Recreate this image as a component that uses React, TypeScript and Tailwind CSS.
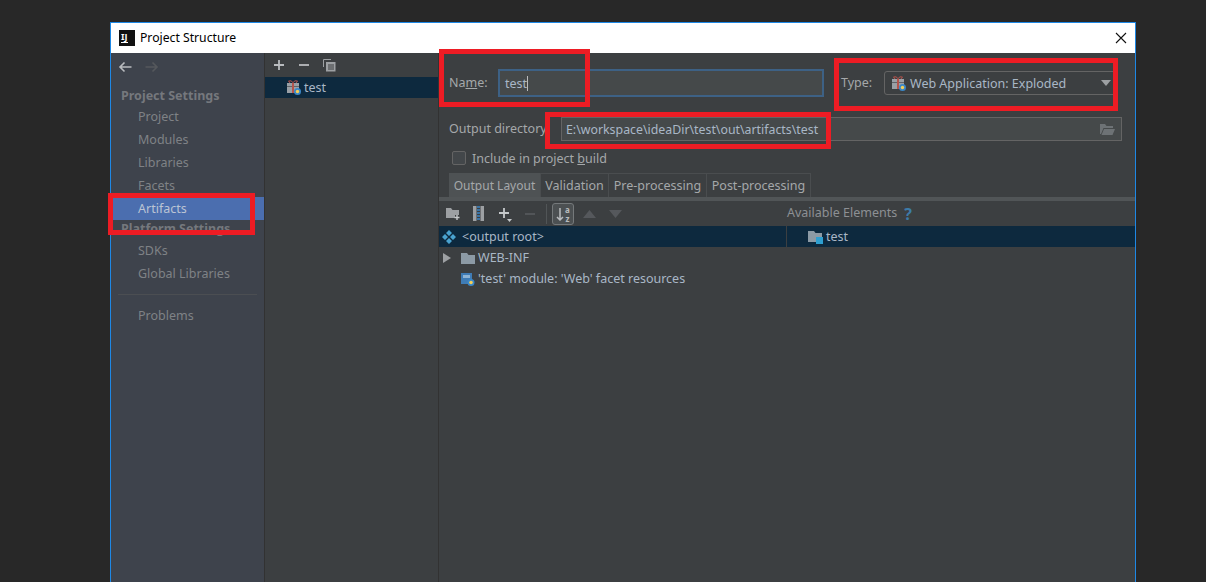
const FONT = "font-['Noto_Sans','Open_Sans',sans-serif]";

const settingsTop = ["Project", "Modules", "Libraries", "Facets"];
const platformItems = ["SDKs", "Global Libraries"];

function ArtifactIcon() {
  return (
    <svg width="14" height="15" viewBox="0 0 14 15" className="shrink-0">
      <path d="M3 3 L1.5 1 L4 .8 L6 2.6 L8 .8 L10.5 1 L9 3" fill="none" stroke="#b5544c" strokeWidth="1" />
      <rect x="0" y="3" width="12" height="10" fill="#9aa0a6" />
      <rect x="0" y="6" width="12" height="1" fill="#5f6368" />
      <rect x="5" y="3" width="2" height="10" fill="#b5544c" />
      <circle cx="10.5" cy="11.5" r="3.5" fill="#3a87c8" />
      <circle cx="10.5" cy="11.5" r="1.7" fill="#f4cf58" />
    </svg>
  );
}

function SidebarItem({ label, active }: { label: string; active?: boolean }) {
  return (
    <div
      className={
        "h-[23px] pl-[27px] flex items-center text-[12.5px] " +
        (active ? "bg-[#4b6eaf] text-[#bbc4d4]" : "text-[#7f8286]")
      }
    >
      <span className="relative top-px">{label}</span>
    </div>
  );
}

function RedBox({ className }: { className: string }) {
  return <div className={"absolute border-[5px] border-[#ed1c24] " + className} />;
}

function Tab({ label, active, width }: { label: string; active?: boolean; width: string }) {
  return (
    <div
      className={
        "h-[24px] flex items-center justify-center border-r border-[#4a4d4f] text-[#a5a8aa] " +
        width +
        (active ? " bg-[#4e5254] text-[12px]" : " bg-[#3c3f41] border-t text-[12.5px]")
      }
    >
      <span className="relative top-px">{label}</span>
    </div>
  );
}

export default function App() {
  return (
    <div className={"relative w-[1206px] h-[582px] overflow-hidden bg-[#282828] pl-[110px] pt-[22px] " + FONT}>
      <div className="w-[1026px] h-[560px] border-x border-t border-[#1e88e5] flex flex-col bg-[#3c3f41]">
        {/* title bar */}
        <div className="h-[30px] shrink-0 bg-white flex items-center pl-[8px] pr-[8px] text-[12.2px] text-black">
          <div className="w-[16px] h-[16px] bg-[#111] text-white text-[9px] font-bold leading-none pt-[2px] pl-[2px] mr-[5px]">
            IJ
            <div className="w-[7px] h-px bg-white mt-[1px]" />
          </div>
          <span>Project Structure</span>
          <svg width="12" height="12" viewBox="0 0 12 12" className="ml-auto">
            <path d="M1 1 L11 11 M11 1 L1 11" stroke="#111" strokeWidth="1.1" />
          </svg>
        </div>

        <div className="flex flex-1 min-h-0">
          {/* settings sidebar */}
          <div className="w-[154px] shrink-0 bg-[#3e434c] border-r border-[#323232]">
            <div className="h-[28px] pl-[7px] flex items-center gap-[13px]">
              <svg width="14" height="12" viewBox="0 0 14 12">
                <path d="M13.5 6 H2 M6.5 1.5 L2 6 L6.5 10.5" fill="none" stroke="#b9bcbf" strokeWidth="1.6" />
              </svg>
              <svg width="14" height="12" viewBox="0 0 14 12">
                <path d="M.5 6 H12 M7.5 1.5 L12 6 L7.5 10.5" fill="none" stroke="#55585c" strokeWidth="1.6" />
              </svg>
            </div>
            <div className="h-[24px] pl-[10px] pt-[6px] flex items-center text-[12.5px] font-bold text-[#75787d]">
              Project Settings
            </div>
            {settingsTop.map((s) => (
              <SidebarItem key={s} label={s} />
            ))}
            <SidebarItem label="Artifacts" active />
            <div className="h-[19px] pl-[10px] flex items-center text-[12.5px] font-bold text-[#75787d]">
              Platform Settings
            </div>
            {platformItems.map((s) => (
              <SidebarItem key={s} label={s} />
            ))}
            <div className="h-px bg-[#4b4e52] mx-[7px] mt-[9px]" />
            <div className="mt-[9px]">
              <SidebarItem label="Problems" />
            </div>
          </div>

          {/* artifact list */}
          <div className="w-[174px] shrink-0 border-r border-[#323232]">
            <div className="h-[24px] pl-[8px] flex items-center gap-[13px]">
              <svg width="12" height="12" viewBox="0 0 12 12">
                <path d="M6 1 V11 M1 6 H11" stroke="#b9bcbf" strokeWidth="1.8" />
              </svg>
              <svg width="12" height="12" viewBox="0 0 12 12">
                <path d="M1 6 H11" stroke="#b9bcbf" strokeWidth="1.8" />
              </svg>
              <svg width="13" height="13" viewBox="0 0 13 13">
                <path d="M.5 8 V.5 H8" fill="none" stroke="#9da0a3" />
                <rect x="3" y="3" width="9.5" height="9.5" fill="#9da0a3" />
                <path d="M5 6 H11 M5 8 H11 M5 10 H11" stroke="#3c3f41" />
              </svg>
            </div>
            <div className="h-[21px] bg-[#0d293e] pl-[22px] flex items-center gap-[3px] text-[12.5px] text-[#a9b7c6]">
              <ArtifactIcon />
              <span className="relative top-px">test</span>
            </div>
          </div>

          {/* artifact details */}
          <div className="flex-1 min-w-0 flex flex-col">
            <div className="h-[64px] shrink-0 pl-[10px] pr-[19px] pt-[16px] flex items-start text-[12.5px] text-[#a5a8aa]">
              <span className="w-[49px] h-[28px] pt-px flex items-center">
                <span>
                  Na<span className="underline">m</span>e:
                </span>
              </span>
              <div className="w-[326px] h-[28px] border-[2px] border-[#3d6185] bg-[#45494a] pl-[5px] flex items-center text-[#a9b7c6]">
                <span className="relative top-px">test</span>
                <span className="w-px h-[15px] bg-[#bbb]" />
              </div>
              <span className="ml-[17px] w-[43px] h-[28px] pt-px flex items-center">Type:</span>
              <div className="flex-1 h-[24px] mt-[2px] border border-[#646464] rounded-[3px] pl-[7px] pr-[4px] flex items-center gap-[4px] text-[#a9b7c6]">
                <ArtifactIcon />
                <span className="relative top-px">Web Application: Exploded</span>
                <svg width="10" height="6" viewBox="0 0 10 6" className="ml-auto">
                  <path d="M0 0 H10 L5 6 Z" fill="#9da0a3" />
                </svg>
              </div>
            </div>
            <div className="h-[24px] shrink-0 pl-[10px] pr-[13px] flex items-center text-[12.5px] text-[#a5a8aa]">
              <span className="w-[112px]">Output directory</span>
              <div className="flex-1 h-[24px] border border-[#646464] bg-[#45494a] pl-[4px] pr-[6px] flex items-center text-[12.35px] text-[#a9b7c6]">
                <span className="relative top-px">E:\workspace\ideaDir\test\out\artifacts\test</span>
                <svg width="15" height="12" viewBox="0 0 15 12" className="ml-auto">
                  <path d="M0 1 H5 L6.5 3 H13 V5 H3.5 L1 11 H0 Z M4 6 H15 L12.5 12 H1.5 Z" fill="#6d7275" />
                </svg>
              </div>
            </div>
            <div className="h-[32px] shrink-0 pl-[13px] pt-[2px] flex items-center gap-[6px] text-[12.5px] text-[#a5a8aa]">
              <span className="w-[14px] h-[14px] border border-[#646464] rounded-[2px] bg-[#43474a]" />
              <span className="relative top-px">
                Include in project <span className="underline">b</span>uild
              </span>
            </div>
            <div className="shrink-0 pl-[10px] flex">
              <Tab label="Output Layout" active width="w-[92px]" />
              <Tab label="Validation" width="w-[68px]" />
              <Tab label="Pre-processing" width="w-[98px]" />
              <Tab label="Post-processing" width="w-[104px]" />
            </div>
            <div className="h-[4px] shrink-0 bg-[#515557]" />

            {/* output layout toolbar */}
            <div className="h-[25px] shrink-0 flex items-center">
              <div className="w-[348px] pl-[7px] flex items-center">
                <svg width="14" height="13" viewBox="0 0 14 13" className="mr-[13px]">
                  <path d="M0 1 H5 L6.5 3 H13 V8 H9 V11 H0 Z" fill="#9da0a3" />
                  <path d="M11 8 V13 M8.5 10.5 H13.5" stroke="#c5c8ca" strokeWidth="1.4" />
                </svg>
                <svg width="11" height="15" viewBox="0 0 11 15" className="mr-[14px]">
                  <rect width="3.5" height="15" fill="#9da0a3" />
                  <rect x="7.5" width="3.5" height="15" fill="#9da0a3" />
                  <path d="M4 1 H7 M4 4 H7 M4 7 H7 M4 10 H7 M4 13 H7" stroke="#3a87c8" strokeWidth="1.3" />
                </svg>
                <svg width="15" height="16" viewBox="0 0 15 16" className="mr-[12px]">
                  <path d="M6 2 V12 M1 7 H11" stroke="#c5c8ca" strokeWidth="1.8" />
                  <path d="M9 13 H14 L11.5 16 Z" fill="#c5c8ca" />
                </svg>
                <svg width="10" height="10" viewBox="0 0 10 10" className="mr-[11px]">
                  <path d="M0 5 H10" stroke="#55585c" strokeWidth="1.8" />
                </svg>
                <div className="w-px h-[20px] bg-[#515557] mr-[5px]" />
                <div className="w-[22px] h-[22px] border border-[#75797b] rounded-[3px] bg-[#4c5052] flex items-center justify-center gap-[1px] mr-[9px]">
                  <svg width="8" height="14" viewBox="0 0 8 14">
                    <path d="M4 1 V13 M1 10 L4 13 L7 10" fill="none" stroke="#b9bcbf" strokeWidth="1.5" />
                  </svg>
                  <div className="flex flex-col items-center text-[8px] font-bold leading-[9px] text-[#b9bcbf]">
                    <span>a</span>
                    <span>z</span>
                  </div>
                </div>
                <svg width="13" height="8" viewBox="0 0 13 8" className="mr-[13px]">
                  <path d="M0 8 L6.5 0 L13 8 Z" fill="#55585c" />
                </svg>
                <svg width="13" height="8" viewBox="0 0 13 8">
                  <path d="M0 0 L6.5 8 L13 0 Z" fill="#55585c" />
                </svg>
              </div>
              <div className="flex items-center text-[12.5px] text-[#8d9094] gap-[7px]">
                <span>Available Elements</span>
                <span className="text-[16px] leading-none font-bold text-[#3d7ba8]">?</span>
              </div>
            </div>

            {/* output tree + available elements */}
            <div className="flex flex-col text-[12.5px] text-[#a9b7c6]">
              <div className="h-[21px] bg-[#0d293e] flex">
                <div className="w-[348px] shrink-0 border-r border-[#3c3f41] pl-[3px] flex items-center gap-[6px]">
                  <svg width="14" height="14" viewBox="0 0 14 14" className="shrink-0">
                    <path d="M7 0 L10 3 L7 6 L4 3 Z M3 4 L6 7 L3 10 L0 7 Z M11 4 L14 7 L11 10 L8 7 Z M7 8 L10 11 L7 14 L4 11 Z" fill="#4aa3d0" />
                  </svg>
                  <span className="relative top-px">&lt;output root&gt;</span>
                </div>
                <div className="pl-[21px] flex items-center gap-[3px]">
                  <svg width="15" height="14" viewBox="0 0 15 14" className="shrink-0">
                    <path d="M0 1 H6 L7.5 3 H14 V12 H0 Z" fill="#8c9aa5" />
                    <rect x="8" y="7" width="7" height="7" fill="#2e9fd0" />
                  </svg>
                  <span className="relative top-px">test</span>
                </div>
              </div>
              <div className="h-[21px] pl-[4px] flex items-center">
                <svg width="8" height="10" viewBox="0 0 8 10" className="mr-[10px]">
                  <path d="M0 0 L8 5 L0 10 Z" fill="#9da0a3" />
                </svg>
                <svg width="14" height="12" viewBox="0 0 14 12" className="mr-[3px]">
                  <path d="M0 1 H6 L7.5 3 H14 V12 H0 Z" fill="#8c9aa5" />
                </svg>
                <span className="relative top-px">WEB-INF</span>
              </div>
              <div className="h-[21px] pl-[22px] flex items-center gap-[3px]">
                <svg width="14" height="14" viewBox="0 0 14 14" className="shrink-0">
                  <rect width="11" height="11" y="1" fill="#3f7cb5" />
                  <rect x="2" y="3" width="7" height="3" fill="#8fb4d4" />
                  <circle cx="10" cy="10.5" r="3.5" fill="#3a87c8" />
                  <circle cx="10" cy="10.5" r="1.8" fill="#f4cf58" />
                </svg>
                <span className="relative top-px">'test' module: 'Web' facet resources</span>
              </div>
            </div>
          </div>
        </div>
      </div>

      {/* red annotation boxes drawn over the screenshot */}
      <RedBox className="left-[439px] top-[49px] w-[151px] h-[58px]" />
      <RedBox className="left-[834px] top-[58px] w-[284px] h-[53px]" />
      <RedBox className="left-[545px] top-[112px] w-[286px] h-[37px]" />
      <RedBox className="left-[108px] top-[193px] w-[147px] h-[42px]" />
    </div>
  );
}
